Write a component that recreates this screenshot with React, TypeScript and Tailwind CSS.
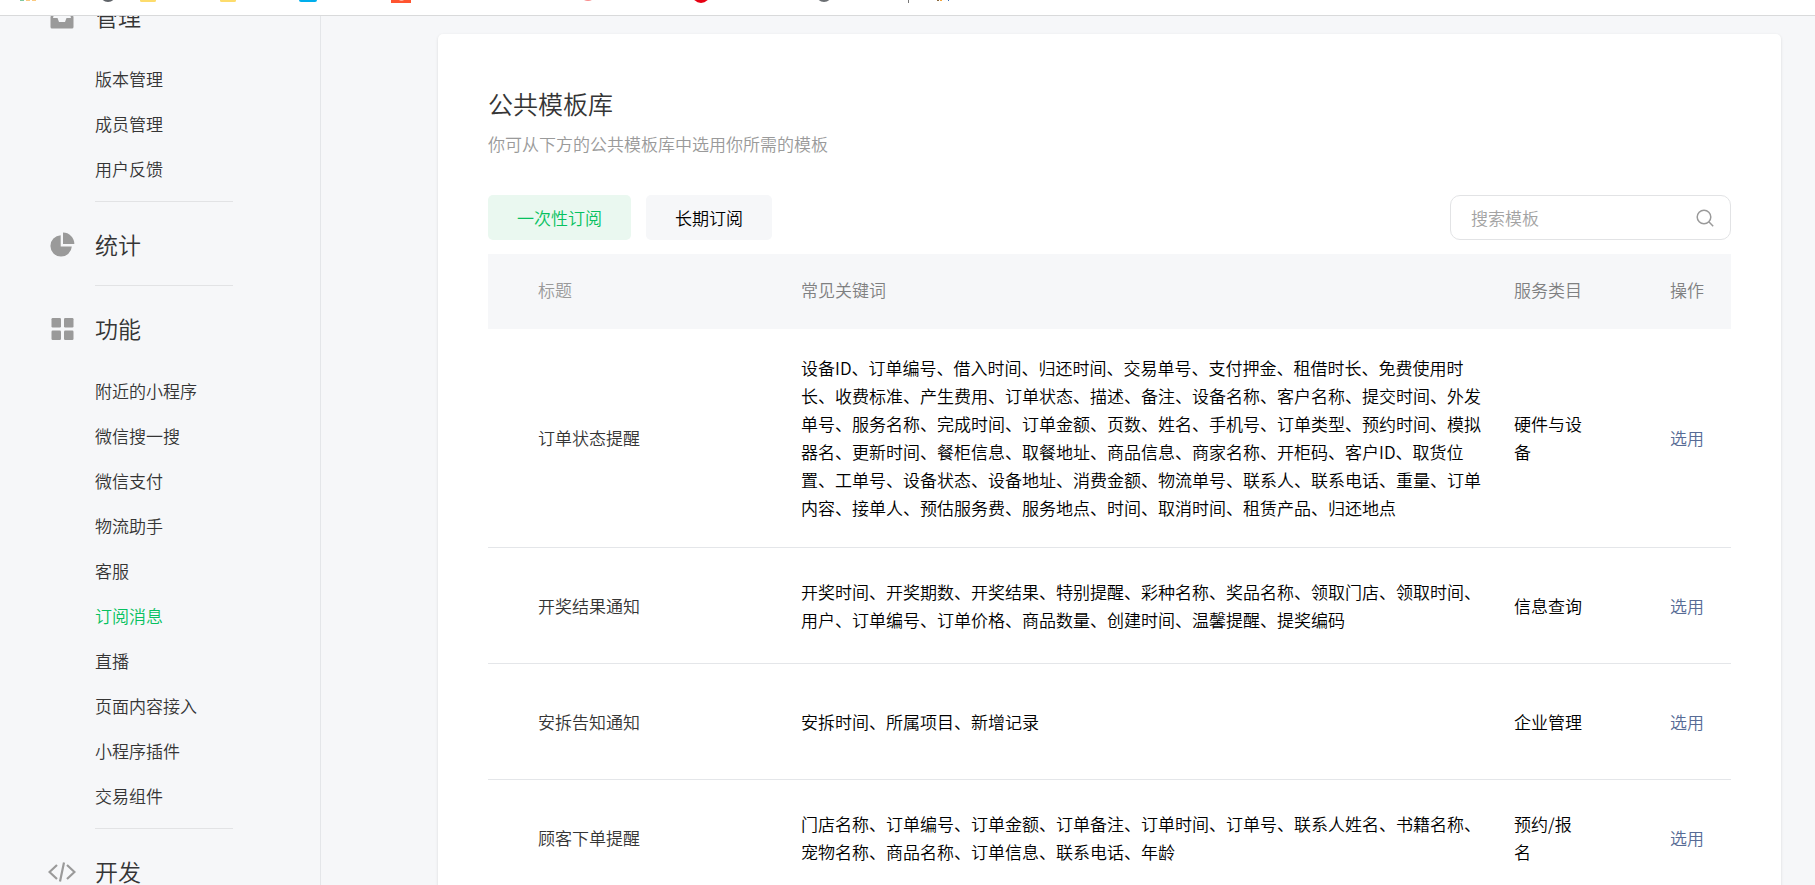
import { Fragment, ReactNode } from "react";

const InboxIcon = () => (
  <svg width="28" height="28" viewBox="0 0 28 28" fill="#9a9a9a">
    <path d="M6 3h16l3.500 11v10a1.500 1.500 0 0 1-1.500 1.500H4A1.500 1.500 0 0 1 2.500 24V14L6 3zm1.500 3L5 15h4.500l1.500 4h6l1.500-4H23l-2.500-9h-13z" />
  </svg>
);

const PieIcon = () => (
  <svg width="28" height="28" viewBox="0 0 28 28" fill="#9a9a9a">
    <path d="M12.700 4.200A10.700 10.700 0 1 0 23.800 15.500H12.700z" />
    <path d="M15 1.500A11.300 11.300 0 0 1 26.300 13H15z" />
  </svg>
);

const GridIcon = () => (
  <svg width="28" height="28" viewBox="0 0 28 28" fill="#9a9a9a">
    <rect x="3.500" y="3" width="9.500" height="9.500" rx="1.200" />
    <rect x="16" y="3" width="9.500" height="9.500" rx="1.200" />
    <rect x="3.500" y="15.500" width="9.500" height="9.500" rx="1.200" />
    <rect x="16" y="15.500" width="9.500" height="9.500" rx="1.200" />
  </svg>
);

const CodeIcon = () => (
  <svg width="28" height="28" viewBox="0 0 28 28" fill="none" stroke="#9a9a9a" strokeWidth="2.200">
    <path d="M9 7l-7.500 7L9 21M19 7l7.500 7L19 21M16 4.500l-4 19" />
  </svg>
);

type Section = { title: string; icon: ReactNode; items: string[] };

const sections: Section[] = [
  { title: "管理", icon: <InboxIcon />, items: ["版本管理", "成员管理", "用户反馈"] },
  { title: "统计", icon: <PieIcon />, items: [] },
  {
    title: "功能",
    icon: <GridIcon />,
    items: ["附近的小程序", "微信搜一搜", "微信支付", "物流助手", "客服", "订阅消息", "直播", "页面内容接入", "小程序插件", "交易组件"],
  },
  { title: "开发", icon: <CodeIcon />, items: [] },
];

const rows = [
  {
    title: "订单状态提醒",
    keywords:
      "设备ID、订单编号、借入时间、归还时间、交易单号、支付押金、租借时长、免费使用时长、收费标准、产生费用、订单状态、描述、备注、设备名称、客户名称、提交时间、外发单号、服务名称、完成时间、订单金额、页数、姓名、手机号、订单类型、预约时间、模拟器名、更新时间、餐柜信息、取餐地址、商品信息、商家名称、开柜码、客户ID、取货位置、工单号、设备状态、设备地址、消费金额、物流单号、联系人、联系电话、重量、订单内容、接单人、预估服务费、服务地点、时间、取消时间、租赁产品、归还地点",
    category: "硬件与设备",
  },
  {
    title: "开奖结果通知",
    keywords:
      "开奖时间、开奖期数、开奖结果、特别提醒、彩种名称、奖品名称、领取门店、领取时间、用户、订单编号、订单价格、商品数量、创建时间、温馨提醒、提奖编码",
    category: "信息查询",
  },
  { title: "安拆告知通知", keywords: "安拆时间、所属项目、新增记录", category: "企业管理" },
  {
    title: "顾客下单提醒",
    keywords:
      "门店名称、订单编号、订单金额、订单备注、订单时间、订单号、联系人姓名、书籍名称、宠物名称、商品名称、订单信息、联系电话、年龄",
    category: "预约/报名",
  },
];

const BookmarkStrip = () => (
  <header className="h-4 shrink-0 overflow-hidden border-b border-[#d9dadb] bg-white">
    <svg width="1000" height="15" viewBox="0 0 1000 15" aria-hidden="true">
      <rect x="20" y="0" width="4" height="1" fill="#7fc8a0" />
      <rect x="26" y="0" width="4" height="1" fill="#fbc97f" />
      <rect x="32" y="0" width="4" height="1" fill="#fbc97f" />
      <circle cx="108" cy="-6" r="8" fill="#5f6368" />
      <rect x="140" y="-10" width="16" height="12" rx="1.500" fill="#fddc6c" />
      <rect x="220" y="-10" width="16" height="12" rx="1.500" fill="#fddc6c" />
      <rect x="299" y="-10" width="18" height="12" rx="2" fill="#00aeec" />
      <rect x="391" y="-10" width="20" height="13" fill="#ff5430" />
      <circle cx="401.500" cy="-2" r="3" fill="#ffb09c" />
      <circle cx="588" cy="-7" r="8" fill="#f98b8b" />
      <circle cx="701" cy="-6" r="9" fill="#e60012" />
      <circle cx="824" cy="-6" r="8" fill="#6b6f73" />
      <rect x="908" y="0" width="1" height="3" fill="#777777" />
      <rect x="937" y="0" width="2" height="1" fill="#8a6a3f" />
      <rect x="940" y="0" width="2" height="1" fill="#f3a63c" />
      <rect x="948" y="0" width="1" height="1" fill="#3f6fb5" />
    </svg>
  </header>
);

const Sidebar = () => (
  <aside className="w-[321px] shrink-0 overflow-hidden border-r border-[#e4e6e9]">
    <nav className="-mt-[42px]">
      {sections.map((section, i) => (
        <Fragment key={section.title}>
          {i > 0 && <hr className="ml-[95px] w-[138px] border-[#e2e3e5]" />}
          <div className={section.items.length > 0 ? "pb-[10px]" : "pb-px"}>
            <h2 className="flex h-[82px] items-center gap-[19px] pt-[3px] pl-12 text-[23px] text-[#353535]">
              {section.icon}
              {section.title}
            </h2>
            <ul>
              {section.items.map((item) => (
                <li key={item}>
                  <a
                    href="#"
                    className={
                      item === "订阅消息"
                        ? "block pl-[95px] leading-[45px] text-[#07c160]"
                        : "block pl-[95px] leading-[45px] text-[#353535]"
                    }
                  >
                    {item}
                  </a>
                </li>
              ))}
            </ul>
          </div>
        </Fragment>
      ))}
    </nav>
  </aside>
);

const TemplateTable = () => (
  <table className="mt-[14px] w-full table-fixed text-left">
    <colgroup>
      <col className="w-[313px]" />
      <col />
      <col className="w-[156px]" />
      <col className="w-[61px]" />
    </colgroup>
    <thead>
      <tr className="h-[75px] bg-[#f6f7f9] text-[#7f8081]">
        <th className="pb-1 pl-[50px] font-[350] text-[#9a9a9a]">标题</th>
        <th className="pb-1 font-[350]">常见关键词</th>
        <th className="pb-1 font-[350]">服务类目</th>
        <th className="pb-1 font-[350]">操作</th>
      </tr>
    </thead>
    <tbody>
      {rows.map((row) => (
        <tr key={row.title} className="h-[116px] border-b border-[#e4e6e9] text-black">
          <td className="pl-[50px] text-[#353535]">{row.title}</td>
          <td className="py-[25px] pr-6 leading-7">{row.keywords}</td>
          <td className="pr-[84px] leading-7">{row.category}</td>
          <td>
            <a href="#" className="text-[#576b95]">选用</a>
          </td>
        </tr>
      ))}
    </tbody>
  </table>
);

export default function App() {
  return (
    <div className="flex h-screen flex-col overflow-hidden bg-[#f6f7f9] font-['Noto_Sans_CJK_SC',sans-serif] text-[17px] font-[350]">
      <BookmarkStrip />
      <div className="flex min-h-0 flex-1">
        <Sidebar />
        <main className="min-w-0 flex-1 overflow-hidden pt-[18px] pr-[34px] pl-[117px]">
          <section className="rounded-[5px] bg-white px-[50px] pt-[49px] pb-[50px] shadow-[0_1px_3px_rgba(0,0,0,0.12)]">
            <h1 className="text-[25px] leading-10 text-[#353535]">公共模板库</h1>
            <p className="mt-[7px] leading-7 text-[#9a9a9a]">你可从下方的公共模板库中选用你所需的模板</p>
            <div className="mt-[37px] flex items-center gap-[15px]">
              <button className="h-[45px] rounded-[5px] bg-[#eaf8f0] px-[29px] text-[#07c160]">一次性订阅</button>
              <button className="h-[45px] rounded-[5px] bg-[#f6f7f9] px-[29px] text-black">长期订阅</button>
              <label className="ml-auto flex h-[45px] w-[281px] items-center rounded-[10px] border border-[#e2e3e5] pr-4 pl-5">
                <input
                  type="text"
                  aria-label="搜索模板"
                  placeholder="搜索模板"
                  className="min-w-0 flex-1 bg-transparent outline-none placeholder:text-[#a3a3a3]"
                />
                <svg width="18" height="18" viewBox="0 0 18 18" fill="none" stroke="#9a9a9a" strokeWidth="1.500">
                  <circle cx="8" cy="8" r="6.800" />
                  <path d="M12.800 12.800l4.400 4.400" />
                </svg>
              </label>
            </div>
            <TemplateTable />
          </section>
        </main>
      </div>
    </div>
  );
}
